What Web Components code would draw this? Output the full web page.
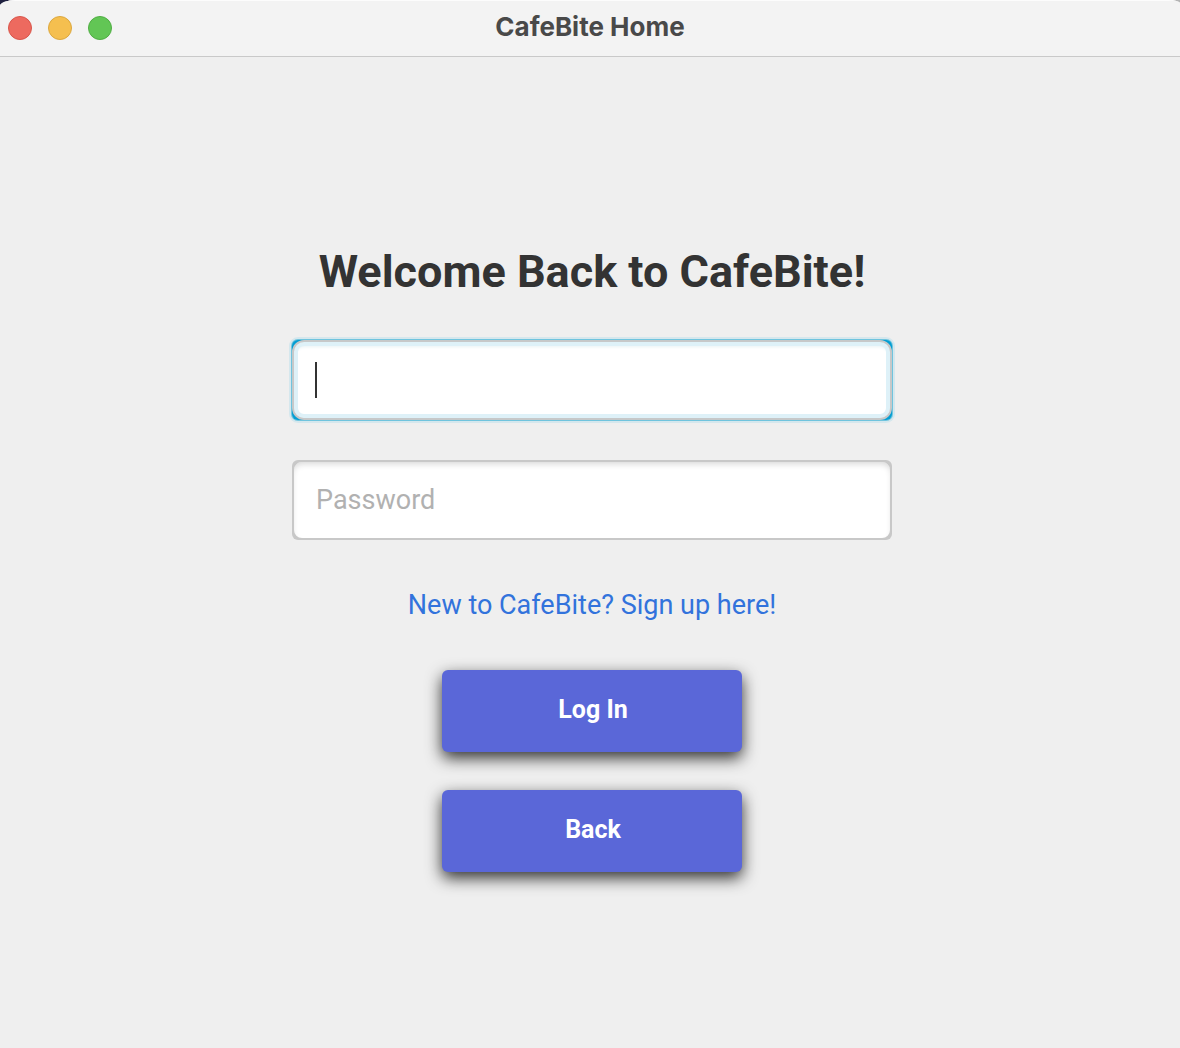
<!DOCTYPE html>
<html lang="en">
<head>
<meta charset="utf-8">
<title>CafeBite Home</title>
<style>
html, body { height: 100%; }
body { margin: 0; background: linear-gradient(90deg, #1f2140 50%, #b4b4b4 50%); font-family: Inter, "Liberation Sans", sans-serif; }
</style>
</head>
<body>
<app-window heading="CafeBite Home">
  <login-form></login-form>
</app-window>
<script>
class AppWindow extends HTMLElement {
  connectedCallback() {
    const root = this.attachShadow({ mode: 'open' });
    root.innerHTML = `
      <style>
        :host { display: flex; flex-direction: column; min-height: 100%; box-sizing: border-box; background: #efefef; border-radius: 16px 12px 0 0 / 6px 3px 0 0; overflow: hidden; }
        header { display: grid; grid-template-columns: 1fr auto 1fr; align-items: center; height: 57px; box-sizing: border-box; padding: 0 8px; background: #f3f3f3; box-shadow: inset 0 1px #fcfcfc; border-bottom: 1px solid #c9c9c9; }
        .lights { display: flex; gap: 16px; }
        .lights svg { display: block; }
        h1 { margin: 0; font-size: 26px; line-height: 32px; font-weight: 700; color: #494949; padding-bottom: 2px; }
        main { flex: 1; display: flex; flex-direction: column; justify-content: center; padding: 10px 0 0 4px; }
      </style>
      <header>
        <div class="lights">
          <svg width="24" height="24"><circle cx="12" cy="12" r="11.5" fill="#ed6a5f" stroke="#d8564b"/></svg>
          <svg width="24" height="24"><circle cx="12" cy="12" r="11.5" fill="#f5bf4f" stroke="#dba73f"/></svg>
          <svg width="24" height="24"><circle cx="12" cy="12" r="11.5" fill="#62c655" stroke="#50ad43"/></svg>
        </div>
        <h1></h1>
      </header>
      <main><slot></slot></main>`;
    root.querySelector('h1').textContent = this.getAttribute('heading');
  }
}

class TextEntry extends HTMLElement {
  connectedCallback() {
    const root = this.attachShadow({ mode: 'open' });
    root.innerHTML = `
      <style>
        :host { display: block; width: 600px; max-width: 100%; }
        .frame { border-radius: 6px; background: #c8c8c8; }
        input { display: block; width: 100%; height: 80px; box-sizing: border-box; border: 2px solid #c8c8c8; border-radius: 10px; outline: none; padding: 0 22px; font: 400 27px/36px Roboto, sans-serif; color: #333; background: #fff; box-shadow: inset 0 4px 6px -2px #d8d8d8; }
        input::placeholder { color: #b1b1b1; opacity: 1; }
        :host([active]) .frame { background: #039ed3; box-shadow: 0 0 0 1px #6fc4de, 0 0 0 3px #d5e7ed; }
        :host([active]) input {
          caret-color: transparent; border-color: #c6c8c9; border-radius: 12px;
          background: linear-gradient(#333, #333) 21px 20px / 2px 36px no-repeat #fff;
          box-shadow: inset 0 0 0 4px #def1f8, inset 0 6px 4px -2px #dcebf0;
        }
      </style>
      <div class="frame"><input></div>`;
    const input = root.querySelector('input');
    input.type = this.getAttribute('type') || 'text';
    input.placeholder = this.getAttribute('placeholder') || '';
    input.setAttribute('aria-label', this.getAttribute('label'));
  }
}

class ActionButton extends HTMLElement {
  connectedCallback() {
    this.attachShadow({ mode: 'open' }).innerHTML = `
      <style>
        :host { display: block; width: 300px; }
        button { display: block; width: 100%; height: 82px; border: 0; border-radius: 6px; padding: 0 0 2px 2px; background: #5a67d8; color: #fff; font: 700 25px/32px Roboto, sans-serif; box-shadow: 0 6px 16px rgba(0,0,0,.8); cursor: pointer; }
      </style>
      <button type="button"><slot></slot></button>`;
  }
}

class LoginForm extends HTMLElement {
  connectedCallback() {
    this.attachShadow({ mode: 'open' }).innerHTML = `
      <style>
        :host { display: block; }
        form { display: flex; flex-direction: column; align-items: center; gap: 40px; }
        h2 { margin: 0; font: 700 45px/56px Roboto, sans-serif; color: #333; }
        a { font: 400 27px/50px Roboto, sans-serif; color: #3273dc; text-decoration: none; }
        .actions { display: flex; flex-direction: column; gap: 38px; }
      </style>
      <form>
        <h2>Welcome Back to CafeBite!</h2>
        <text-entry active label="Username"></text-entry>
        <text-entry type="password" label="Password" placeholder="Password"></text-entry>
        <a href="#signup">New to CafeBite? Sign up here!</a>
        <div class="actions">
          <action-button>Log In</action-button>
          <action-button>Back</action-button>
        </div>
      </form>`;
  }
}

customElements.define('text-entry', TextEntry);
customElements.define('action-button', ActionButton);
customElements.define('login-form', LoginForm);
customElements.define('app-window', AppWindow);
</script>
</body>
</html>
